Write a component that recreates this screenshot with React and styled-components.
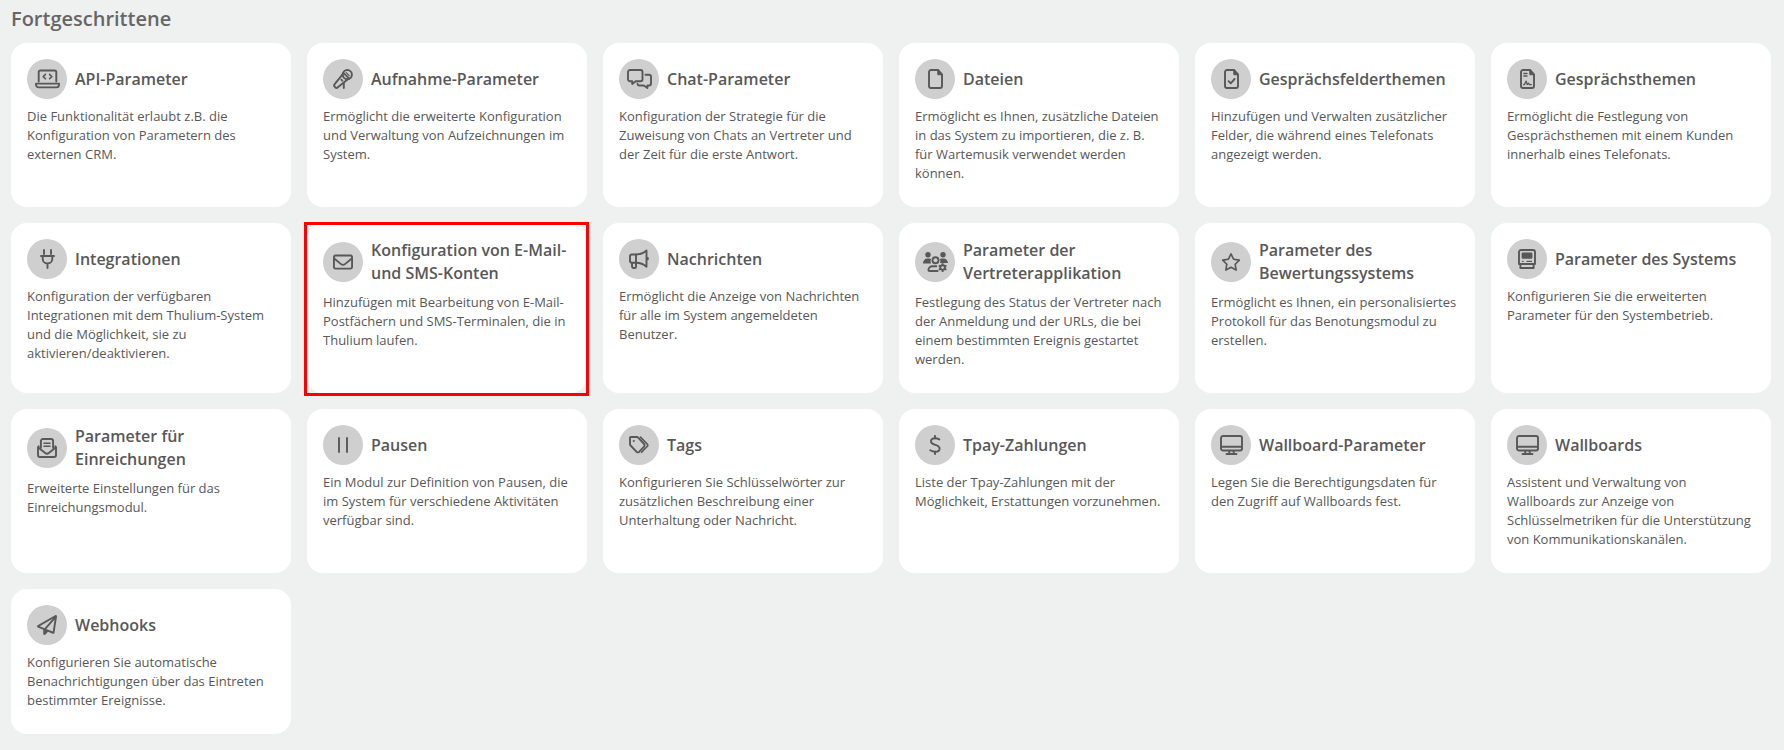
import React from "react";
import styled, { createGlobalStyle } from "styled-components";
import { FaRegEnvelope, FaRegPaperPlane, FaRegStar } from "react-icons/fa6";

const GlobalStyle = createGlobalStyle`
  * {
    box-sizing: border-box;
  }

  body {
    margin: 0;
    background-color: #eff1f1;
    color: #585858;
    font-family: "Open Sans", "Noto Sans", sans-serif;
    font-size: 13px;
    line-height: 19px;
  }
`;

const Page = styled.main`
  padding: 6px 13px 12px 11px;
`;

const SectionTitle = styled.h2`
  margin: 0 0 11px;
  color: #666;
  font-size: 20px;
  font-weight: 600;
  line-height: 26px;
`;

const Grid = styled.div`
  display: grid;
  grid-template-columns: repeat(6, minmax(0, 1fr));
  gap: 16px;
`;

const Card = styled.a`
  position: relative;
  padding: 16px 16px 24px;
  border-radius: 16px;
  background-color: #fff;
  color: inherit;
  text-decoration: none;
`;

// square frame drawn over the rounded card
const Marker = styled.span`
  position: absolute;
  inset: -1px -2px -3px -3px;
  border: 3px solid #fe0000;
  pointer-events: none;
`;

const CardHeader = styled.div`
  display: flex;
  align-items: center;
  gap: 8px;
  margin-bottom: 8px;
`;

const IconCircle = styled.span`
  display: flex;
  flex: none;
  align-items: center;
  justify-content: center;
  width: 40px;
  height: 40px;
  border-radius: 50%;
  background-color: #cfcfcf;

  svg {
    width: auto;
    height: 20px;
  }
`;

const CardTitle = styled.h3`
  margin: 0;
  font-size: 16px;
  font-weight: 600;
  line-height: 23px;
`;

const Description = styled.p`
  margin: 0;
`;

const Icon = ({ width, children }) => (
  <svg
    viewBox={`0 0 ${width} 20`}
    fill="none"
    stroke="currentColor"
    strokeWidth="1.9"
    strokeLinecap="round"
    strokeLinejoin="round"
    aria-hidden="true"
  >
    {children}
  </svg>
);

const LaptopCodeIcon = () => (
  <Icon width={25}>
    <path d="M3.7 12.5V3.2A1.7 1.7 0 0 1 5.4 1.5h14.2a1.7 1.7 0 0 1 1.7 1.7v9.3" />
    <path d="M1 14.6h23v1.2a2.6 2.6 0 0 1-2.6 2.6H3.6A2.6 2.6 0 0 1 1 15.8z" />
    <path strokeWidth="1.6" d="M10.4 5.4 8.2 7.6l2.2 2.2M14.6 5.4l2.2 2.2-2.2 2.2" />
  </Icon>
);

const MicrophoneIcon = () => (
  <Icon width={20}>
    <circle cx="14.3" cy="5.6" r="4.6" />
    <path d="M10 4.8 1.7 15.2a1.8 1.8 0 0 0 0 2.5l.6.6a1.8 1.8 0 0 0 2.500 0L15.2 10" />
    <path d="M10.4 3.8l5.9 5.9M8.4 10.7l.9.9M10.8 13.8V19" />
    <path strokeWidth="1.2" d="M13.2 3.6l3 3" />
  </Icon>
);

const CommentsIcon = () => (
  <Icon width={25}>
    <path d="M3 1h10.5a2 2 0 0 1 2 2v7.2a2 2 0 0 1-2 2H8.7L5.2 15v-2.8H3a2 2 0 0 1-2-2V3a2 2 0 0 1 2-2z" />
    <path d="M18.5 5.8H22a2 2 0 0 1 2 2v6.7a2 2 0 0 1-2 2h-1.6V19l-3.6-2.500h-4.300a2 2 0 0 1-2-1.700" />
  </Icon>
);

const FileShape = () => (
  <>
    <path d="M10 1H3a2 2 0 0 0-2 2v14a2 2 0 0 0 2 2h9a2 2 0 0 0 2-2V5.5z" />
    <path fill="currentColor" stroke="none" d="M9.2.5v4.3a1.5 1.5 0 0 0 1.5 1.5h4z" />
  </>
);

const FileIcon = () => (
  <Icon width={15}>
    <FileShape />
  </Icon>
);

const FileCheckIcon = () => (
  <Icon width={15}>
    <FileShape />
    <path d="M4.6 12.2l2.1 2.1 3.9-4.3" />
  </Icon>
);

const FileContractIcon = () => (
  <Icon width={15}>
    <FileShape />
    <path strokeWidth="1.3" d="M3.8 4.5H7M3.8 7H7" />
    <path strokeWidth="1.3" d="M3.6 15.7h.8l1.7-3.6 1.2 3.4 1.2-1.3 1 1.5h1.9" />
  </Icon>
);

const PlugIcon = () => (
  <Icon width={15}>
    <path d="M4 1v4M11 1v4M1 7h13M2.700 7v2.700a4.800 4.800 0 0 0 9.600 0V7M7.500 14.500V19" />
  </Icon>
);

const BullhornIcon = () => (
  <Icon width={20}>
    <path d="M2.6 5.5H7v8.2H2.6A1.6 1.6 0 0 1 1 12.1v-5a1.6 1.6 0 0 1 1.6-1.6z" />
    <path d="M7 5.5c4.2 0 7.4-1.2 10.5-4v16.2c-3.1-2.8-6.3-4-10.5-4" />
    <path d="M3 13.7v3.6A1.7 1.7 0 0 0 4.7 19h1A1.3 1.3 0 0 0 7 17.7v-4M18.8 9v1.2" />
  </Icon>
);

const UsersCogIcon = () => (
  <Icon width={25}>
    <g fill="currentColor" stroke="none">
      <circle cx="5" cy="2.7" r="2.7" />
      <circle cx="20" cy="2.7" r="2.7" />
      <path d="M0 11a4.400 4.400 0 0 1 4.400-4.400h1.800c.7 0 1.300.2 1.900.5A4.800 4.800 0 0 0 8 11.500H.5A.5.500 0 0 1 0 11zM25 11a4.400 4.400 0 0 0-4.400-4.400h-1.800c-.7 0-1.300.2-1.900.5a4.800 4.800 0 0 1 .2 3.900h7.900z" />
    </g>
    <circle cx="12.5" cy="8.3" r="3" />
    <path d="M14.6 19H6.2a.9.9 0 0 1-.8-.9 4 4 0 0 1 4-3.900h3.900" />
    <circle cx="19.6" cy="15.6" r="2.3" />
    <path
      strokeWidth="1.8"
      strokeLinecap="butt"
      d="M19.6 13.5v-2.3M19.6 17.7V20M21.4 14.6l2-1.2M17.800 16.600l-2 1.200M17.800 14.600l-2-1.200M21.400 16.600l2 1.200"
    />
  </Icon>
);

const ComputerIcon = () => (
  <Icon width={18}>
    <path d="M3 1h12a2 2 0 0 1 2 2v12H1V3a2 2 0 0 1 2-2zM2.4 15.2V19h13.2v-3.8" />
    <path fill="currentColor" stroke="none" d="M4.8 3.4h8.4a1.2 1.2 0 0 1 1.2 1.2v3.9a1.2 1.2 0 0 1-1.2 1.2H4.8a1.2 1.2 0 0 1-1.2-1.2V4.6a1.2 1.2 0 0 1 1.2-1.2z" />
    <path strokeWidth="1.3" d="M4.5 12.4h.6M9 12.4h4.5" />
  </Icon>
);

const LetterIcon = () => (
  <Icon width={20}>
    <path d="M1.7 8.3A2 2 0 0 0 1 9.8V17a2 2 0 0 0 2 2h14a2 2 0 0 0 2-2V9.8a2 2 0 0 0-.7-1.5" />
    <path d="M1.3 9.6l6.9 5.5a2.9 2.9 0 0 0 3.6 0l6.9-5.5" />
    <path d="M3.9 9.7V3a2 2 0 0 1 2-2h8.2a2 2 0 0 1 2 2v6.7" />
    <path strokeWidth="1.5" d="M7 5.2h6M7 8.3h6" />
  </Icon>
);

const PauseIcon = () => (
  <Icon width={12}>
    <path d="M2 3v14M10 3v14" />
  </Icon>
);

const TagsIcon = () => (
  <Icon width={20}>
    <path d="M1 2.8v6.3a2 2 0 0 0 .6 1.4l6 6.3a1.7 1.7 0 0 0 2.5 0l5-5.2a1.9 1.9 0 0 0 0-2.6L9.2 2.6A2 2 0 0 0 7.8 2h-6a.8.8 0 0 0-.8.8z" />
    <path strokeWidth="1.6" d="M11.5 2.1l6.8 7a1.5 1.5 0 0 1 0 2.2l-5.7 6" />
    <circle cx="4.8" cy="6" r="1.1" fill="currentColor" stroke="none" />
  </Icon>
);

const DollarIcon = () => (
  <Icon width={12}>
    <path d="M6 .9v2.3M6 16.8v2.3" />
    <path d="M10.3 4.400C9 3.700 7.500 3.200 6 3.200c-2.400 0-4 1.200-4 3.100 0 4.600 8.600 2.600 8.600 7.200 0 2.100-1.800 3.300-4.300 3.300-1.800 0-3.500-.6-5-1.500" />
  </Icon>
);

const DesktopIcon = () => (
  <Icon width={23}>
    <path d="M3 1h17a2 2 0 0 1 2 2v10.5a2 2 0 0 1-2 2H3a2 2 0 0 1-2-2V3a2 2 0 0 1 2-2zM1 11.7h21M9.6 15.5 9 19M13.4 15.5 14 19M6.5 19h10" />
  </Icon>
);

const modules = [
  {
    title: "API-Parameter",
    icon: LaptopCodeIcon,
    text: "Die Funktionalität erlaubt z.B. die Konfiguration von Parametern des externen CRM.",
  },
  {
    title: "Aufnahme-Parameter",
    icon: MicrophoneIcon,
    text: "Ermöglicht die erweiterte Konfiguration und Verwaltung von Aufzeichnungen im System.",
  },
  {
    title: "Chat-Parameter",
    icon: CommentsIcon,
    text: "Konfiguration der Strategie für die Zuweisung von Chats an Vertreter und der Zeit für die erste Antwort.",
  },
  {
    title: "Dateien",
    icon: FileIcon,
    text: "Ermöglicht es Ihnen, zusätzliche Dateien in das System zu importieren, die z. B. für Wartemusik verwendet werden können.",
  },
  {
    title: "Gesprächsfelderthemen",
    icon: FileCheckIcon,
    text: "Hinzufügen und Verwalten zusätzlicher Felder, die während eines Telefonats angezeigt werden.",
  },
  {
    title: "Gesprächsthemen",
    icon: FileContractIcon,
    text: "Ermöglicht die Festlegung von Gesprächsthemen mit einem Kunden innerhalb eines Telefonats.",
  },
  {
    title: "Integrationen",
    icon: PlugIcon,
    text: "Konfiguration der verfügbaren Integrationen mit dem Thulium-System und die Möglichkeit, sie zu aktivieren/deaktivieren.",
  },
  {
    title: "Konfiguration von E-Mail- und SMS-Konten",
    icon: FaRegEnvelope,
    text: "Hinzufügen mit Bearbeitung von E-Mail-Postfächern und SMS-Terminalen, die in Thulium laufen.",
    marked: true,
  },
  {
    title: "Nachrichten",
    icon: BullhornIcon,
    text: "Ermöglicht die Anzeige von Nachrichten für alle im System angemeldeten Benutzer.",
  },
  {
    title: "Parameter der Vertreterapplikation",
    icon: UsersCogIcon,
    text: "Festlegung des Status der Vertreter nach der Anmeldung und der URLs, die bei einem bestimmten Ereignis gestartet werden.",
  },
  {
    title: "Parameter des Bewertungssystems",
    icon: FaRegStar,
    text: "Ermöglicht es Ihnen, ein personalisiertes Protokoll für das Benotungsmodul zu erstellen.",
  },
  {
    title: "Parameter des Systems",
    icon: ComputerIcon,
    text: "Konfigurieren Sie die erweiterten Parameter für den Systembetrieb.",
  },
  {
    title: "Parameter für Einreichungen",
    icon: LetterIcon,
    text: "Erweiterte Einstellungen für das Einreichungsmodul.",
  },
  {
    title: "Pausen",
    icon: PauseIcon,
    text: "Ein Modul zur Definition von Pausen, die im System für verschiedene Aktivitäten verfügbar sind.",
  },
  {
    title: "Tags",
    icon: TagsIcon,
    text: "Konfigurieren Sie Schlüsselwörter zur zusätzlichen Beschreibung einer Unterhaltung oder Nachricht.",
  },
  {
    title: "Tpay-Zahlungen",
    icon: DollarIcon,
    text: "Liste der Tpay-Zahlungen mit der Möglichkeit, Erstattungen vorzunehmen.",
  },
  {
    title: "Wallboard-Parameter",
    icon: DesktopIcon,
    text: "Legen Sie die Berechtigungsdaten für den Zugriff auf Wallboards fest.",
  },
  {
    title: "Wallboards",
    icon: DesktopIcon,
    text: "Assistent und Verwaltung von Wallboards zur Anzeige von Schlüsselmetriken für die Unterstützung von Kommunikationskanälen.",
  },
  {
    title: "Webhooks",
    icon: FaRegPaperPlane,
    text: "Konfigurieren Sie automatische Benachrichtigungen über das Eintreten bestimmter Ereignisse.",
  },
];

export default function App() {
  return (
    <>
      <GlobalStyle />
      <Page>
        <SectionTitle>Fortgeschrittene</SectionTitle>
        <Grid>
          {modules.map(({ title, icon: ModuleIcon, text, marked }) => (
            <Card key={title} href="#">
              <CardHeader>
                <IconCircle>
                  <ModuleIcon />
                </IconCircle>
                <CardTitle>{title}</CardTitle>
              </CardHeader>
              <Description>{text}</Description>
              {marked && <Marker />}
            </Card>
          ))}
        </Grid>
      </Page>
    </>
  );
}
